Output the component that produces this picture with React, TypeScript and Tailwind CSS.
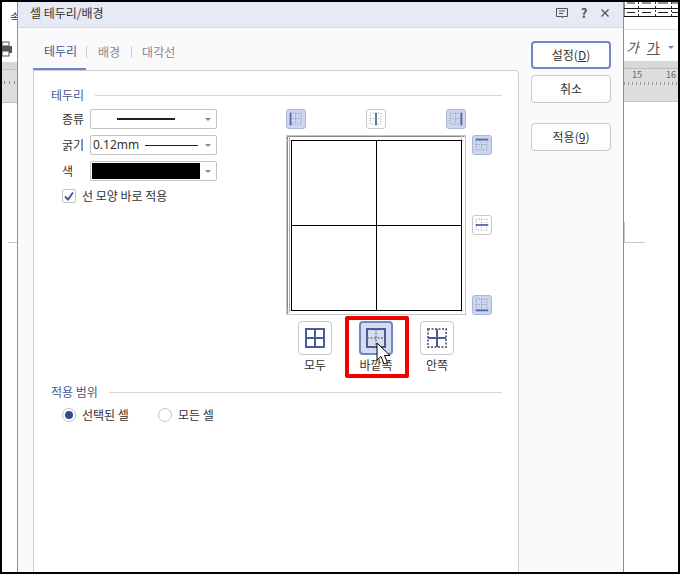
const FONT = "font-['Noto_Sans_CJK_KR','Noto_Sans',sans-serif]";

type Edge = "left" | "vcenter" | "right" | "top" | "hcenter" | "bottom";

// 점선 격자 + 강조선 하나짜리 작은 아이콘
function EdgeIcon({ edge }: { edge: Edge }) {
  const solid = {
    left: "M4 3V17",
    vcenter: "M10 3V17",
    right: "M16 3V17",
    top: "M3 4H17",
    hcenter: "M3 10H17",
    bottom: "M3 16H17",
  }[edge];
  return (
    <svg width="20" height="20" viewBox="0 0 20 20" fill="none">
      <path
        d="M3.5 3.5H15.5V15.5H3.5ZM9.5 3.5V15.5M3.5 9.5H15.5"
        stroke="#777c88"
        strokeWidth="1"
        strokeDasharray="1 2"
      />
      <path d={solid} stroke="#5268a8" strokeWidth="2" />
    </svg>
  );
}

function EdgeButton({ edge, on }: { edge: Edge; on?: boolean }) {
  return (
    <div
      className={`w-5 h-5 rounded-[3px] border ${
        on ? "bg-[#ccd6f0] border-[#a9b6dc]" : "bg-white border-[#c8c8c8]"
      } flex items-center justify-center`}
    >
      <EdgeIcon edge={edge} />
    </div>
  );
}

function Preset({
  label,
  active,
  inner,
  outer,
}: {
  label: string;
  active?: boolean;
  inner: "solid" | "dot";
  outer: "solid" | "dot";
}) {
  return (
    <div className="w-[34px] flex flex-col items-center">
      <div
        className={`w-[34px] h-[34px] rounded-[4px] flex items-center justify-center ${
          active ? "bg-[#d5dcf2] border-2 border-[#6f86c8]" : "bg-white border border-[#c8c8c8]"
        }`}
      >
        <svg width="22" height="22" viewBox="0 0 22 22" fill="none">
          <path
            d="M2 2H20V20H2Z"
            stroke={outer === "solid" ? "#4a5c98" : "#6f7480"}
            strokeWidth="2"
            strokeDasharray={outer === "solid" ? undefined : "2 1.5"}
          />
          <path
            d="M11 2V20M2 11H20"
            stroke={inner === "solid" ? "#4a5c98" : "#777c88"}
            strokeWidth={inner === "solid" ? 2 : 1.5}
            strokeDasharray={inner === "solid" ? undefined : "2 1.5"}
          />
        </svg>
      </div>
      <span className="mt-[1px] text-[12px] leading-[18px] text-[#333] whitespace-nowrap">{label}</span>
    </div>
  );
}

function SectionTitle({ label }: { label: string }) {
  return (
    <div className="flex items-center gap-[11px]">
      <span className="text-[12px] leading-[18px] text-[#46588f] whitespace-nowrap">{label}</span>
      <div className="flex-1 h-px bg-[#d6d6d6]" />
    </div>
  );
}

function Caret() {
  return <div className="w-0 h-0 border-x-[3px] border-x-transparent border-t-[3px] border-t-[#888]" />;
}

function Field({ label, children }: { label: string; children: React.ReactNode }) {
  return (
    <div className="flex items-center h-5">
      <span className="w-[28px] ml-[11px] text-[12px] text-[#333] whitespace-nowrap">{label}</span>
      <div className="w-[127px] h-5 bg-white border border-[#c4c4c4] rounded-[2px] flex items-center pr-[5px]">
        <div className="flex-1 min-w-0 flex items-center h-full">{children}</div>
        <Caret />
      </div>
    </div>
  );
}

function SideButton({ label, primary, className = "" }: { label: React.ReactNode; primary?: boolean; className?: string }) {
  return (
    <div
      className={`w-20 h-7 rounded-[4px] bg-white flex items-center justify-center text-[12px] text-[#333] ${
        primary ? "border-2 border-[#6f86c8]" : "border border-[#c8c8c8]"
      } ${className}`}
    >
      {label}
    </div>
  );
}

function LeftStrip() {
  return (
    <div className="w-[15px] h-full bg-white flex flex-col overflow-hidden relative">
      <span className="mt-[8px] h-[31px] text-[11px] leading-[14px] text-[#333] pl-[8px] whitespace-nowrap">속</span>
      <svg width="10" height="16" viewBox="0 0 10 16" className="shrink-0">
        <rect x="0" y="5" width="10" height="7" fill="#555" />
        <rect x="0" y="1" width="7" height="4" fill="#fff" stroke="#555" />
        <rect x="0" y="10" width="7" height="5" fill="#fff" stroke="#555" />
      </svg>
      <div className="mt-[5px] h-[8px] bg-[#d8d8d8] border-b border-[#c0c0c0] shrink-0" />
      <div className="h-[33px] bg-[#dddddd] border-b border-[#c0c0c0] shrink-0 pt-[11px] pl-[2px] flex gap-[4px] items-start">
        <div className="w-px h-[3px] bg-[#888]" />
        <div className="w-px h-[3px] bg-[#888]" />
        <div className="w-px h-[3px] bg-[#888]" />
      </div>
      <div className="mt-[139px] ml-[6px] h-px bg-[#c8c8c8] shrink-0" />
    </div>
  );
}

function RightStrip() {
  return (
    <div className="flex-1 min-w-0 h-full bg-white flex flex-col overflow-hidden">
      <svg width="54" height="15" viewBox="0 0 54 15" className="shrink-0">
        <path d="M0 6.5H54M0 14.5H54" stroke="#111" />
        <path d="M0 .5V15" stroke="#111" />
        <path d="M3 1H11M18 1H27M34 1H44M48 1H54M3 10.5H11M18 10.5H27M34 10.5H44M48 10.5H54" stroke="#222" />
        <path d="M14.5 0V15M31.5 0V15M47.5 0V15" stroke="#333" strokeDasharray="2 2" />
      </svg>
      <div className="mt-[12px] h-px bg-[#e2e2e2] shrink-0" />
      <div className="h-[31px] shrink-0 flex items-center pl-[2px] pt-[4px] text-[14px] text-[#555]">
        <span className="italic">가</span>
        <span className="ml-[8px] underline">가</span>
        <div className="ml-[8px]">
          <Caret />
        </div>
      </div>
      <div className="h-[8px] bg-[#d8d8d8] border-b border-[#bdbdbd] shrink-0" />
      <div className="h-[33px] bg-[#dddddd] border-b border-[#c8c8c8] shrink-0 relative">
        <div className="flex justify-between px-[8px] text-[9px] leading-[12px] text-[#666] w-[60px]">
          <span>15</span>
          <span>16</span>
        </div>
        <div className="mt-[1px] h-[3px] bg-[repeating-linear-gradient(90deg,#999_0,#999_1px,transparent_1px,transparent_4px)]" />
      </div>
      <div className="mt-[120px] w-[21px] h-[21px] border-l border-b border-[#c8c8c8] shrink-0" />
    </div>
  );
}

export default function App() {
  return (
    <div className={`w-[680px] h-[574px] bg-black pt-[2px] pb-[2px] pl-[2px] pr-[2px] overflow-hidden ${FONT}`}>
      <div className="h-full flex">
        <LeftStrip />

        {/* 대화상자 */}
        <div className="w-[607px] h-full bg-[#fafafc] border-x border-[#7f8fb8] flex flex-col shrink-0">
          <div className="h-[26px] shrink-0 bg-[#e6eaf5] border-b border-[#d4d8e4] flex items-center pl-[12px] pr-[13px] pb-[3px]">
            <span className="text-[12px] text-[#333] flex-1">셀 테두리/배경</span>
            <svg width="12" height="12" viewBox="0 0 12 12" fill="none" stroke="#555" className="mr-[10px]">
              <path d="M.5 1.5H11.5V9.5H7.5L6.5 11V9.5H.5ZM3 4H9M3 6.5H7" />
            </svg>
            <span className="text-[13px] font-bold text-[#555] w-[12px] text-center mr-[10px]">?</span>
            <svg width="10" height="10" viewBox="0 0 10 10" stroke="#555" strokeWidth="1.3">
              <path d="M1.5 1.5L8.5 8.5M8.5 1.5L1.5 8.5" />
            </svg>
          </div>

          <div className="flex-1 min-h-0 flex pl-[15px]">
            <div className="w-[486px] flex flex-col shrink-0">
              {/* 탭 */}
              <div className="h-[42px] shrink-0 flex items-center pt-[5px] text-[12px] text-[#888]">
                <div className="w-[53px] h-full flex items-center pl-[11px] text-[#46588f] border-b-2 border-[#6f86c8]">테두리</div>
                <div className="w-px h-[12px] bg-[#ccc]" />
                <span className="ml-[11px]">배경</span>
                <div className="ml-[11px] w-px h-[12px] bg-[#ccc]" />
                <span className="ml-[10px]">대각선</span>
              </div>

              <div className="flex-1 min-h-0 bg-white border border-[#cfcfcf] border-b-0 rounded-tr-[4px] pt-[15px] pl-[17px] pr-[16px]">
                <SectionTitle label="테두리" />

                <div className="flex mt-[5px]">
                  <div className="w-[235px] shrink-0 flex flex-col gap-[6px]">
                    <Field label="종류">
                      <div className="ml-[26px] w-[58px] h-[2px] bg-[#222]" />
                    </Field>
                    <Field label="굵기">
                      <span className="ml-[2px] text-[12px] font-['Noto_Sans',sans-serif] text-[#333]">0.12mm</span>
                      <div className="ml-[6px] w-[53px] h-px bg-[#222]" />
                    </Field>
                    <Field label="색">
                      <div className="mx-[1px] w-[108px] h-[16px] bg-black" />
                    </Field>
                    <div className="flex items-center ml-[11px]">
                      <div className="w-[14px] h-[14px] bg-white border border-[#c4c4c4] rounded-[2px] flex items-center justify-center">
                        <svg width="10" height="10" viewBox="0 0 10 10" fill="none" stroke="#3a5299" strokeWidth="1.8">
                          <path d="M1 5.5L4 8.5L9 1.5" />
                        </svg>
                      </div>
                      <span className="ml-[6px] text-[12px] text-[#333] whitespace-nowrap">선 모양 바로 적용</span>
                    </div>
                  </div>

                  <div className="flex flex-col">
                    <div className="w-[180px] flex justify-between">
                      <EdgeButton edge="left" on />
                      <EdgeButton edge="vcenter" />
                      <EdgeButton edge="right" on />
                    </div>
                    <div className="flex mt-[6px] gap-[6px]">
                      <svg width="180" height="180" viewBox="0 0 180 180" fill="none" className="shrink-0">
                        <rect x="0.5" y="0.5" width="179" height="179" stroke="#c4c4c4" />
                        <path d="M1.5 1.5H178.5M1.5 1.5V178.5" stroke="#888" />
                        <path d="M3.5 1V178" stroke="#aaa" />
                        <path d="M1 5.5H178M1 175.5H178M175.5 1V178" stroke="#ccc" />
                        <rect x="5.5" y="5.5" width="170" height="170" stroke="#000" />
                        <path d="M90.5 5.5V175.5M5.5 90.5H175.5" stroke="#000" />
                      </svg>
                      <div className="flex flex-col gap-[60px]">
                        <EdgeButton edge="top" on />
                        <EdgeButton edge="hcenter" />
                        <EdgeButton edge="bottom" on />
                      </div>
                    </div>
                    {/* 빨간 표시는 가운데 버튼 위에 겹침 */}
                    <div className="relative w-[180px] flex justify-between pl-[12px] pr-[12px] mt-[6px]">
                      <Preset label="모두" inner="solid" outer="solid" />
                      <Preset label="바깥쪽" inner="dot" outer="solid" active />
                      <Preset label="안쪽" inner="solid" outer="dot" />
                      <div className="absolute left-[59px] top-[-5px] w-[64px] h-[62px] border-4 border-[#f00000] rounded-[2px]" />
                      <svg width="16" height="24" viewBox="0 0 16 24" className="absolute left-[90px] top-[21px]">
                        <path d="M1 1V18L5 14.5L8 22L11.5 20.5L8.5 13.5H14Z" fill="#fff" stroke="#000" strokeLinejoin="round" />
                      </svg>
                    </div>
                  </div>
                </div>

                <div className="mt-[9px]">
                  <SectionTitle label="적용 범위" />
                </div>
                <div className="flex items-center ml-[11px] mt-[5px] text-[12px] text-[#333]">
                  <div className="w-[14px] h-[14px] rounded-full bg-white border border-[#c4c4c4] flex items-center justify-center">
                    <div className="w-2 h-2 rounded-full bg-[#2f4b94]" />
                  </div>
                  <span className="ml-[6px] w-[76px] whitespace-nowrap">선택된 셀</span>
                  <div className="w-[14px] h-[14px] rounded-full bg-white border border-[#c4c4c4]" />
                  <span className="ml-[6px] whitespace-nowrap">모든 셀</span>
                </div>
              </div>
            </div>

            <div className="ml-[12px] pt-[13px] flex flex-col">
              <SideButton
                primary
                label={
                  <span>
                    설정(<span className="underline">D</span>)
                  </span>
                }
              />
              <SideButton className="mt-[6px]" label="취소" />
              <SideButton
                className="mt-[20px]"
                label={
                  <span>
                    적용(<span className="underline">9</span>)
                  </span>
                }
              />
            </div>
          </div>
        </div>

        <RightStrip />
      </div>
    </div>
  );
}
